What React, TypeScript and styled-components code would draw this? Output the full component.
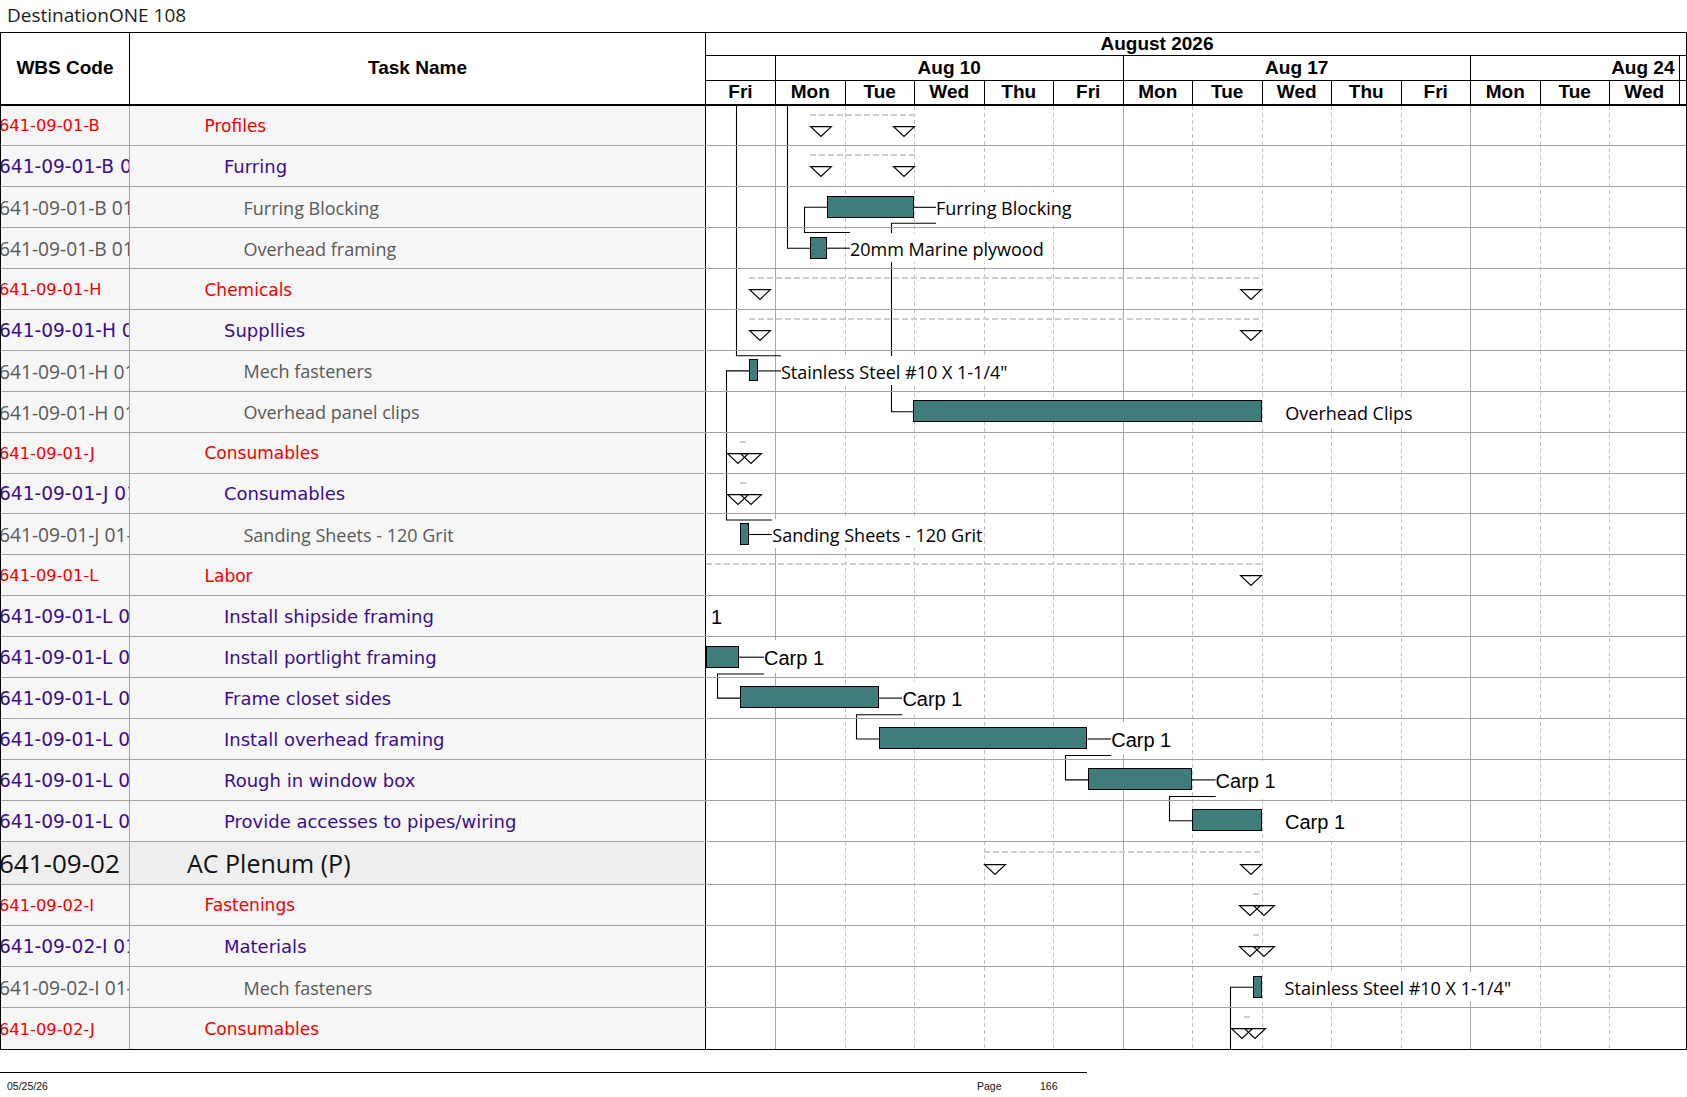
import React from "react";
import styled, { createGlobalStyle, css } from "styled-components";

type Level = "red" | "purple" | "gray" | "top";

const GlobalStyle = createGlobalStyle`
  html, body { margin: 0; padding: 0; background: #fff; }
  body { width: 1687px; height: 1097px; overflow: hidden; font-family: "Liberation Sans", Arial, sans-serif; }
  *, *::before, *::after { box-sizing: border-box; }
`;

const Page = styled.div`
  width: 1687px;
  height: 1097px;
  display: flex;
  flex-direction: column;
  background: #fff;
`;

const Title = styled.div`
  height: 32px;
  padding: 2px 0 0 7px;
  font-family: "Open Sans", sans-serif;
  font-size: 19px;
  line-height: 26px;
  color: #1c1c1c;
  white-space: nowrap;
`;

const Table = styled.div`
  width: 1687px;
  border: 1px solid #000;
  display: flex;
  flex-direction: column;
`;

const HeaderRow = styled.div`
  display: grid;
  grid-template-columns: 129px 576px 980px;
  height: 72.5px;
  border-bottom: 2px solid #000;
  background: #fff;
`;

const HeadCell = styled.div`
  display: flex;
  align-items: center;
  justify-content: center;
  border-right: 1px solid #000;
  font-family: "Liberation Sans", Arial, sans-serif;
  font-weight: 700;
  font-size: 19px;
  color: #000;
`;

const TimeHeader = styled.div`
  display: flex;
  flex-direction: column;
  font-family: "Liberation Sans", Arial, sans-serif;
  font-weight: 700;
  font-size: 19px;
  color: #000;
`;

const MonthRow = styled.div`
  height: 23px;
  border-bottom: 1px solid #000;
  display: flex;
  align-items: center;
  justify-content: center;
  padding-right: 78px;
`;

const WeekRow = styled.div`
  height: 24.5px;
  border-bottom: 1px solid #000;
  display: flex;
`;

const WeekCell = styled.div<{ $w: number; $right?: boolean }>`
  flex: 0 0 ${(p) => p.$w}px;
  border-right: 1px solid #000;
  display: flex;
  align-items: center;
  justify-content: ${(p) => (p.$right ? "flex-end" : "center")};
  padding-right: ${(p) => (p.$right ? 4 : 0)}px;
  white-space: nowrap;
`;

const DayRow = styled.div`
  flex: 1;
  display: flex;
`;

const DayCell = styled.div<{ $w: number }>`
  flex: 0 0 ${(p) => p.$w}px;
  border-right: 1px solid #000;
  display: flex;
  align-items: center;
  justify-content: center;
`;

const Filler = styled.div`
  flex: 1;
`;

const Body = styled.div`
  display: flex;
`;

const LeftPane = styled.div`
  width: 705px;
  display: flex;
  flex-direction: column;
`;

const LeftRow = styled.div<{ $h: number; $top?: boolean }>`
  display: grid;
  grid-template-columns: 129px 576px;
  height: ${(p) => p.$h}px;
  border-bottom: 1px solid #a4a4a4;
  background: ${(p) => (p.$top ? "#eeeeee" : "#f6f6f6")};
  &:last-child {
    border-bottom: none;
  }
`;

const codeFont: Record<Level, ReturnType<typeof css>> = {
  red: css`
    font-family: "DejaVu Sans", Verdana, sans-serif;
    font-size: 16.3px;
    color: #f00000;
  `,
  purple: css`
    font-family: "DejaVu Sans", Verdana, sans-serif;
    font-size: 18.6px;
    color: #3b0d8c;
  `,
  gray: css`
    font-family: "Open Sans", sans-serif;
    font-size: 19.2px;
    color: #595959;
  `,
  top: css`
    font-family: "Open Sans", sans-serif;
    font-size: 26px;
    color: #111;
  `,
};

const nameFont: Record<Level, ReturnType<typeof css>> = {
  red: css`
    font-family: "DejaVu Sans", Verdana, sans-serif;
    font-size: 17px;
    color: #f00000;
  `,
  purple: css`
    font-family: "DejaVu Sans", Verdana, sans-serif;
    font-size: 18px;
    color: #3b0d8c;
  `,
  gray: css`
    font-family: "Open Sans", sans-serif;
    font-size: 18px;
    color: #595959;
  `,
  top: css`
    font-family: "Open Sans", sans-serif;
    font-size: 25px;
    color: #111;
  `,
};

const indent: Record<Level, number> = { red: 74.5, purple: 94, gray: 113.5, top: 57 };

const CodeCell = styled.div<{ $level: Level }>`
  border-right: 1px solid #a4a4a4;
  overflow: hidden;
  white-space: nowrap;
  display: flex;
  align-items: center;
  padding-top: 1px;
  ${(p) => codeFont[p.$level]}
`;

const CodeText = styled.span`
  margin-left: -2px;
`;

const NameCell = styled.div<{ $level: Level }>`
  border-right: 1px solid #000;
  overflow: hidden;
  white-space: nowrap;
  display: flex;
  align-items: center;
  padding-top: 1px;
  padding-left: ${(p) => indent[p.$level]}px;
  ${(p) => nameFont[p.$level]}
`;

const GanttPane = styled.div`
  flex: 1;
  position: relative;
  background: #fff;
`;

const GridLayer = styled.div`
  position: absolute;
  inset: 0;
  display: flex;
  z-index: 0;
`;

const GridCol = styled.div<{ $w: number; $kind: "solid" | "dashed" | "none" }>`
  flex: 0 0 ${(p) => p.$w}px;
  height: 100%;
  ${(p) =>
    p.$kind === "solid" &&
    css`
      border-right: 1px solid #a9a9a9;
    `}
  ${(p) =>
    p.$kind === "dashed" &&
    css`
      background: repeating-linear-gradient(to bottom, #c0c0c0 0 4px, transparent 4px 7px) right top / 1px 100% no-repeat;
    `}
`;

const Wires = styled.svg`
  position: absolute;
  left: 0;
  top: 0;
  z-index: 1;
  overflow: visible;
`;

const GanttRows = styled.div`
  position: relative;
  z-index: 2;
  display: flex;
  flex-direction: column;
`;

const GanttRow = styled.div<{ $h: number }>`
  position: relative;
  height: ${(p) => p.$h}px;
  border-bottom: 1px solid #a4a4a4;
  &:last-child {
    border-bottom: none;
  }
`;

const Bar = styled.div<{ $x: number; $w: number }>`
  position: absolute;
  top: 8.5px;
  left: ${(p) => p.$x}px;
  width: ${(p) => p.$w}px;
  height: 22px;
  background: #3e7d7c;
  border: 1px solid #000;
`;

const BarLabel = styled.div<{ $x: number; $kind: "os" | "ar" }>`
  position: absolute;
  left: ${(p) => p.$x}px;
  white-space: nowrap;
  background: #fff;
  color: #000;
  ${(p) =>
    p.$kind === "os"
      ? css`
          top: 5px;
          height: 29px;
          padding-top: 2px;
          line-height: 29px;
          font-family: "Open Sans", sans-serif;
          font-size: 18px;
        `
      : css`
          top: 3px;
          height: 33px;
          padding-top: 2px;
          line-height: 33px;
          font-family: "Liberation Sans", Arial, sans-serif;
          font-size: 20px;
        `}
`;

const SummaryDash = styled.div<{ $x: number; $w: number; $y: number }>`
  position: absolute;
  left: ${(p) => p.$x}px;
  top: ${(p) => p.$y}px;
  width: ${(p) => p.$w}px;
  height: 2px;
  background: repeating-linear-gradient(to right, #cdcdcd 0 6px, transparent 6px 9px);
`;

const Milestone = styled.svg<{ $x: number; $y: number }>`
  position: absolute;
  left: ${(p) => p.$x}px;
  top: ${(p) => p.$y}px;
  overflow: visible;
`;

const Footer = styled.div`
  margin-top: 22px;
  display: flex;
  flex-direction: column;
`;

const FooterRule = styled.div`
  width: 1087px;
  border-top: 1px solid #000;
`;

const FooterText = styled.div`
  display: flex;
  padding: 7px 0 0 7px;
  font-family: "Liberation Sans", Arial, sans-serif;
  font-size: 10.5px;
  line-height: 13px;
  color: #111;
`;

const FooterItem = styled.span<{ $w: number }>`
  flex: 0 0 ${(p) => p.$w}px;
`;

interface RowDef {
  code: string;
  name: string;
  level: Level;
}

const rows: RowDef[] = [
  { code: "641-09-01-B", name: "Profiles", level: "red" },
  { code: "641-09-01-B 01", name: "Furring", level: "purple" },
  { code: "641-09-01-B 01-01", name: "Furring Blocking", level: "gray" },
  { code: "641-09-01-B 01-02", name: "Overhead framing", level: "gray" },
  { code: "641-09-01-H", name: "Chemicals", level: "red" },
  { code: "641-09-01-H 01", name: "Suppllies", level: "purple" },
  { code: "641-09-01-H 01-01", name: "Mech fasteners", level: "gray" },
  { code: "641-09-01-H 01-02", name: "Overhead panel clips", level: "gray" },
  { code: "641-09-01-J", name: "Consumables", level: "red" },
  { code: "641-09-01-J 01", name: "Consumables", level: "purple" },
  { code: "641-09-01-J 01-01", name: "Sanding Sheets - 120 Grit", level: "gray" },
  { code: "641-09-01-L", name: "Labor", level: "red" },
  { code: "641-09-01-L 01", name: "Install shipside framing", level: "purple" },
  { code: "641-09-01-L 02", name: "Install portlight framing", level: "purple" },
  { code: "641-09-01-L 03", name: "Frame closet sides", level: "purple" },
  { code: "641-09-01-L 04", name: "Install overhead framing", level: "purple" },
  { code: "641-09-01-L 05", name: "Rough in window box", level: "purple" },
  { code: "641-09-01-L 06", name: "Provide accesses to pipes/wiring", level: "purple" },
  { code: "641-09-02", name: "AC Plenum (P)", level: "top" },
  { code: "641-09-02-I", name: "Fastenings", level: "red" },
  { code: "641-09-02-I 01", name: "Materials", level: "purple" },
  { code: "641-09-02-I 01-01", name: "Mech fasteners", level: "gray" },
  { code: "641-09-02-J", name: "Consumables", level: "red" },
];

const rowH = (i: number) => (i < 18 ? 40.9 : i === 18 ? 43.3 : 41.1);

interface GanttDef {
  bar?: [number, number];
  label?: { x: number; text: string; kind: "os" | "ar" };
  summary?: { from: number; to: number; tris: number[] };
}

const STEEL = 'Stainless Steel #10 X 1-1/4"';

const gantt: Record<number, GanttDef> = {
  0: { summary: { from: 104, to: 208.5, tris: [104, 186.5] } },
  1: { summary: { from: 104, to: 208.5, tris: [104, 186.5] } },
  2: { bar: [121, 87], label: { x: 230, text: "Furring Blocking", kind: "os" } },
  3: { bar: [104, 17], label: { x: 144, text: "20mm Marine plywood", kind: "os" } },
  4: { summary: { from: 43, to: 555.7, tris: [43, 533.7] } },
  5: { summary: { from: 43, to: 555.7, tris: [43, 533.7] } },
  6: { bar: [43, 8.5], label: { x: 75, text: STEEL, kind: "os" } },
  7: { bar: [207, 349], label: { x: 579.3, text: "Overhead Clips", kind: "os" } },
  8: { summary: { from: 34, to: 42.6, tris: [20.6, 34] } },
  9: { summary: { from: 34, to: 42.6, tris: [20.6, 34] } },
  10: { bar: [34, 9], label: { x: 66.3, text: "Sanding Sheets - 120 Grit", kind: "os" } },
  11: { summary: { from: 0, to: 555.7, tris: [533.7] } },
  12: { label: { x: 5, text: "1", kind: "ar" } },
  13: { bar: [0, 33], label: { x: 58, text: "Carp 1", kind: "ar" } },
  14: { bar: [34, 138.5], label: { x: 196.4, text: "Carp 1", kind: "ar" } },
  15: { bar: [173.3, 208], label: { x: 405.2, text: "Carp 1", kind: "ar" } },
  16: { bar: [382, 103.5], label: { x: 509.6, text: "Carp 1", kind: "ar" } },
  17: { bar: [486.4, 69.5], label: { x: 579, text: "Carp 1", kind: "ar" } },
  18: { summary: { from: 278, to: 555.7, tris: [278.3, 533.7] } },
  19: { summary: { from: 547, to: 555.6, tris: [533, 547] } },
  20: { summary: { from: 547, to: 555.6, tris: [533, 547] } },
  21: { bar: [547, 8.6], label: { x: 578.6, text: STEEL, kind: "os" } },
  22: { summary: { from: 537.8, to: 546.5, tris: [524.5, 537.8] } },
};

const wirePaths = [
  "M81.5,0 V142.2 H104",
  "M144,126.5 H98.5 V101.3 H121",
  "M230,117.2 H185.5 V305.8 H207",
  "M75,249.8 H30.5 V0",
  "M66.3,414 H20.5 V264.9 H43",
  "M58,568 H11.5 V592.1 H34",
  "M196.4,608.8 H150.5 V633 H173.3",
  "M405.2,649.5 H359.5 V673.9 H382",
  "M509.6,690.5 H463.5 V714.8 H486.4",
  "M547,881.2 H524.5 V944",
  "M208,101.3 H230",
  "M121,142.2 H144",
  "M51.5,264.9 H75",
  "M43,428.5 H66.3",
  "M33,551.2 H58",
  "M172.5,592.1 H196.4",
  "M381.3,633 H405.2",
  "M485.5,673.9 H509.6",
];

const DAYS = ["Fri", "Mon", "Tue", "Wed", "Thu", "Fri", "Mon", "Tue", "Wed", "Thu", "Fri", "Mon", "Tue", "Wed"];
const dayW = (i: number) => (i === 0 ? 70 : 69.5);
const gridKind = (i: number): "solid" | "dashed" | "none" =>
  i === 0 || i === 5 || i === 10 ? "solid" : i === 13 ? "none" : "dashed";

const WEEKS = [
  { label: "", w: 70, right: false },
  { label: "Aug 10", w: 347.5, right: false },
  { label: "Aug 17", w: 347.5, right: false },
  { label: "Aug 24", w: 208.5, right: true },
];

const Tri: React.FC<{ x: number; y: number }> = ({ x, y }) => (
  <Milestone $x={x} $y={y} width={22} height={11} viewBox="0 0 22 11">
    <polygon points="0.6,0.6 21.4,0.6 11,10.4" fill="none" stroke="#000" strokeWidth={1.2} />
  </Milestone>
);

export default function App() {
  const bodyH = rows.reduce((s, _r, i) => s + rowH(i), 0);
  return (
    <Page>
      <GlobalStyle />
      <Title>DestinationONE 108</Title>
      <Table>
        <HeaderRow>
          <HeadCell>WBS Code</HeadCell>
          <HeadCell>Task Name</HeadCell>
          <TimeHeader>
            <MonthRow>August 2026</MonthRow>
            <WeekRow>
              {WEEKS.map((w, i) => (
                <WeekCell key={i} $w={w.w} $right={w.right}>
                  {w.label}
                </WeekCell>
              ))}
              <Filler />
            </WeekRow>
            <DayRow>
              {DAYS.map((d, i) => (
                <DayCell key={i} $w={dayW(i)}>
                  {d}
                </DayCell>
              ))}
              <Filler />
            </DayRow>
          </TimeHeader>
        </HeaderRow>
        <Body>
          <LeftPane>
            {rows.map((r, i) => (
              <LeftRow key={i} $h={rowH(i)} $top={r.level === "top"}>
                <CodeCell $level={r.level}>
                  <CodeText>{r.code}</CodeText>
                </CodeCell>
                <NameCell $level={r.level}>{r.name}</NameCell>
              </LeftRow>
            ))}
          </LeftPane>
          <GanttPane>
            <GridLayer>
              {DAYS.map((_d, i) => (
                <GridCol key={i} $w={dayW(i)} $kind={gridKind(i)} />
              ))}
            </GridLayer>
            <Wires width={980} height={bodyH} viewBox={`0 0 980 ${bodyH}`}>
              {wirePaths.map((d, i) => (
                <path key={i} d={d} fill="none" stroke="#000" strokeWidth={1.1} />
              ))}
            </Wires>
            <GanttRows>
              {rows.map((_r, i) => {
                const g = gantt[i] || {};
                const tall = i === 18;
                return (
                  <GanttRow key={i} $h={rowH(i)}>
                    {g.summary && (
                      <>
                        <SummaryDash
                          $x={g.summary.from}
                          $w={g.summary.to - g.summary.from}
                          $y={tall ? 9 : 8}
                        />
                        {g.summary.tris.map((t, k) => (
                          <Tri key={k} x={t} y={tall ? 22 : 20} />
                        ))}
                      </>
                    )}
                    {g.bar && <Bar $x={g.bar[0]} $w={g.bar[1]} />}
                    {g.label && (
                      <BarLabel $x={g.label.x} $kind={g.label.kind}>
                        {g.label.text}
                      </BarLabel>
                    )}
                  </GanttRow>
                );
              })}
            </GanttRows>
          </GanttPane>
        </Body>
      </Table>
      <Footer>
        <FooterRule />
        <FooterText>
          <FooterItem $w={970}>05/25/26</FooterItem>
          <FooterItem $w={63}>Page</FooterItem>
          <FooterItem $w={40}>166</FooterItem>
        </FooterText>
      </Footer>
    </Page>
  );
}
